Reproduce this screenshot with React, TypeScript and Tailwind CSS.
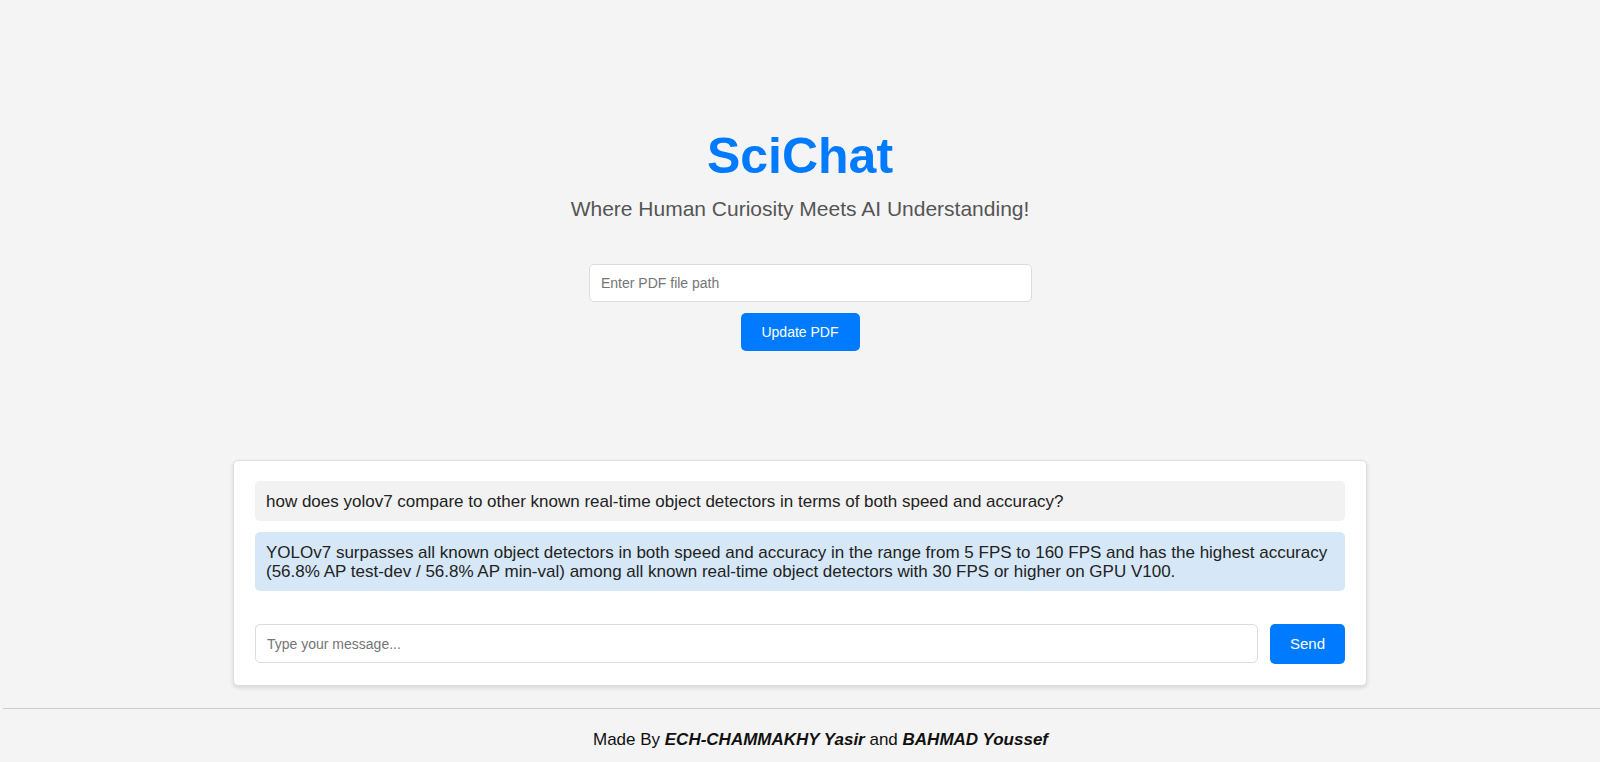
import React, { useState } from 'react';

const messages = [
  {
    role: 'user',
    text: 'how does yolov7 compare to other known real-time object detectors in terms of both speed and accuracy?',
  },
  {
    role: 'bot',
    text: 'YOLOv7 surpasses all known object detectors in both speed and accuracy in the range from 5 FPS to 160 FPS and has the highest accuracy (56.8% AP test-dev / 56.8% AP min-val) among all known real-time object detectors with 30 FPS or higher on GPU V100.',
  },
];

export default function App() {
  const [pdfPath, setPdfPath] = useState('');
  const [draft, setDraft] = useState('');

  return (
    <div className="min-h-[762px] bg-[#f4f4f4] font-['Liberation_Sans',Arial,sans-serif] text-[#222] flex flex-col">
      {/* header */}
      <div className="flex flex-col items-center pt-[128px]">
        <h1 className="text-[50px] leading-[57px] font-bold text-[#007bff]">SciChat</h1>
        <p className="mt-[12px] text-[21px] leading-[24px] text-[#555]">
          Where Human Curiosity Meets AI Understanding!
        </p>

        <input
          value={pdfPath}
          onChange={(e) => setPdfPath(e.target.value)}
          placeholder="Enter PDF file path"
          className="mt-[43px] ml-[21px] w-[443px] h-[38px] px-[11px] bg-white border border-[#dcdcdc] rounded-[5px] text-[14px] placeholder:text-[#757575] outline-none"
        />
        <button className="mt-[11px] w-[119px] h-[38px] rounded-[5px] bg-[#007bff] text-white text-[14px]">
          Update PDF
        </button>
      </div>

      {/* chat */}
      <div className="mt-[109px] mx-auto w-[1134px] bg-white border border-[#dedede] rounded-[5px] shadow-[0_2px_4px_rgba(0,0,0,0.12)] px-[21px] pt-[20px] pb-[21px]">
        <div className="flex flex-col gap-[11px]">
          {messages.map((m, i) => (
            <div
              key={i}
              className={`rounded-[5px] px-[11px] py-[10.5px] text-[17px] leading-[19px] ${
                m.role === 'user' ? 'bg-[#f2f2f2]' : 'bg-[#d6e8f7]'
              }`}
            >
              {m.text}
            </div>
          ))}
        </div>

        <div className="mt-[33px] flex items-start gap-[12px]">
          <input
            value={draft}
            onChange={(e) => setDraft(e.target.value)}
            placeholder="Type your message..."
            className="flex-1 h-[39px] px-[11px] bg-white border border-[#dcdcdc] rounded-[5px] text-[14px] placeholder:text-[#757575] outline-none"
          />
          <button className="w-[75px] h-[40px] rounded-[5px] bg-[#007bff] text-white text-[15px]">Send</button>
        </div>
      </div>

      {/* footer */}
      <div className="mt-[22px] ml-[3px] border-t border-[#cccccc] flex-1 pt-[21px] pb-[14px] pl-[38px] text-center text-[17px] leading-[20px] text-[#111]">
        Made By <b className="italic">ECH-CHAMMAKHY Yasir</b> and <b className="italic">BAHMAD Youssef</b>
      </div>
    </div>
  );
}
